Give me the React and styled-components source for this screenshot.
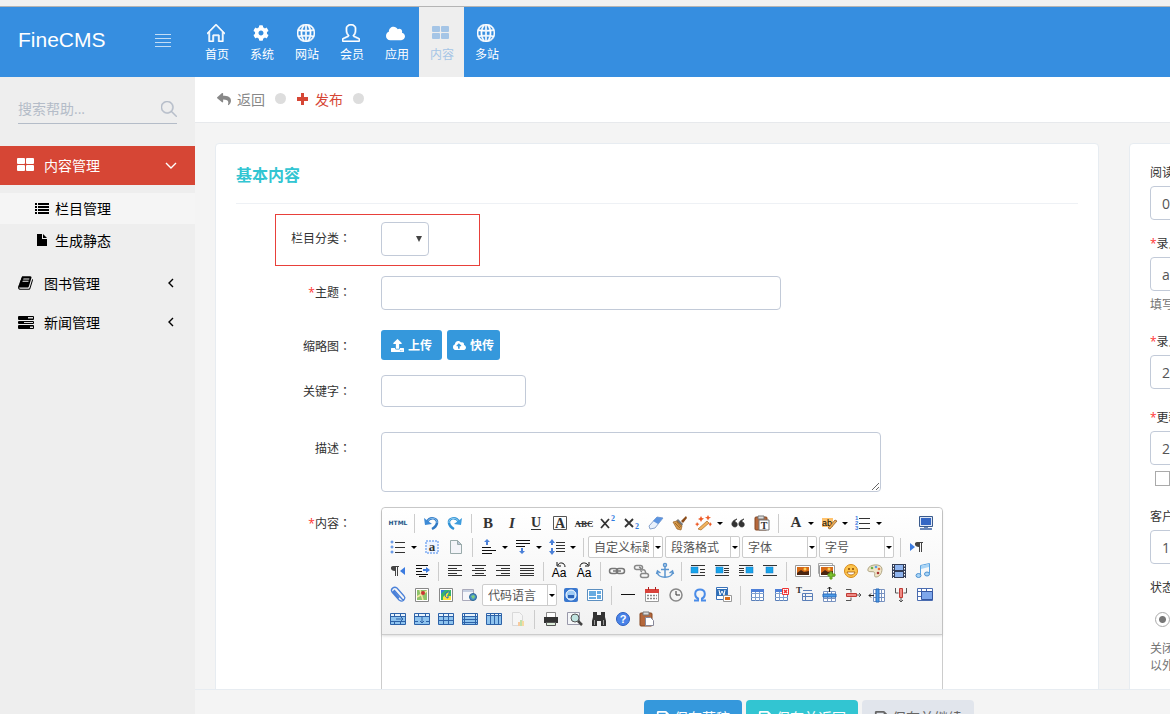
import styled, { createGlobalStyle } from "styled-components";
import {
  FaCloud,
  FaCloudUploadAlt,
  FaCog,
  FaReply,
  FaSave,
  FaUpload,
} from "react-icons/fa";
import { SlGlobe, SlHome, SlMagnifier, SlUser } from "react-icons/sl";

const GlobalStyle = createGlobalStyle`
  * {
    box-sizing: border-box;
  }
  body {
    margin: 0;
    background: #f4f4f4;
    color: #333;
    font-family: "Open Sans", "Noto Sans CJK SC", sans-serif;
    font-size: 12px;
  }
  button, input, select, textarea {
    font-family: inherit;
  }
  a {
    color: inherit;
    text-decoration: none;
  }
`;

const Shell = styled.div`
  height: 100vh;
  overflow: auto;
  scrollbar-width: none;
`;
const Page = styled.div`
  display: flex;
  flex-direction: column;
  min-width: 1423px;
  min-height: 100%;
`;
const TopStrip = styled.div`
  height: 7px;
  background: #f1f1f1;
  border-bottom: 1px solid #b4b4b4;
`;

/* header */
const Header = styled.header`
  display: flex;
  height: 70px;
  background: #368ee0;
  color: #fff;
`;
const Brand = styled.div`
  display: flex;
  align-items: center;
  justify-content: space-between;
  width: 194px;
  padding: 0 23px 4px 18px;
`;
const Logo = styled.a`
  font-family: "Liberation Sans", sans-serif;
  font-size: 21px;
  line-height: 24px;
`;
const MenuToggle = styled.button`
  display: flex;
  flex-direction: column;
  gap: 3px;
  width: 16px;
  padding: 0;
  border: 0;
  background: none;
`;
const MenuLine = styled.span`
  height: 1px;
  background: #c3ddf6;
`;
const Nav = styled.nav`
  display: flex;
`;
const NavItem = styled.a`
  display: flex;
  flex-direction: column;
  align-items: center;
  gap: 3px;
  width: 45px;
  padding: 16px 0 0 1px;
  font-size: 12px;
  line-height: 18px;
  background: ${(props) => (props.$active ? "#eee" : "transparent")};
  color: ${(props) => (props.$active ? "#a5c5e6" : "#fff")};
`;
const NavIcon = styled.span`
  display: flex;
  align-items: center;
  height: 20px;
  margin-right: 3px;
  font-size: ${(props) => props.$size || 18}px;
  stroke-width: 36px;
  svg {
    stroke-width: ${(props) => (props.$size ? 0 : 36)}px;
    stroke: ${(props) => (props.$size ? "none" : "currentColor")};
  }
`;

/* sidebar */
const Columns = styled.div`
  display: flex;
  flex: 1;
`;
const Sidebar = styled.aside`
  width: 195px;
  flex: none;
  background: #eee;
`;
const Search = styled.label`
  display: flex;
  align-items: center;
  height: 30px;
  margin: 17px 18px 22px;
  border-bottom: 1px solid #b4bcc8;
  color: #b4bcc8;
  font-size: 16px;
  svg {
    stroke: currentColor;
    stroke-width: 36px;
  }
`;
const SearchInput = styled.input`
  flex: 1;
  min-width: 0;
  padding: 0;
  border: 0;
  outline: 0;
  background: none;
  font-size: 14px;
  &::placeholder {
    color: #b4bcc8;
  }
`;
const MenuItem = styled.a`
  display: flex;
  align-items: center;
  height: 39px;
  padding: 0 18px 2px 17px;
  font-size: 14px;
  background: ${(props) => (props.$active ? "#d64635" : "transparent")};
  color: ${(props) => (props.$active ? "#fff" : "#000")};
`;
const MenuIcon = styled.span`
  display: flex;
  width: 27px;
`;
const MenuText = styled.span`
  flex: 1;
`;
const SubMenu = styled.div`
  display: grid;
  gap: 1px;
  padding: 8px 0;
`;
const SubItem = styled.a`
  display: flex;
  align-items: center;
  height: 31px;
  padding: 0 0 2px 35px;
  font-size: 14px;
  color: #000;
  background: ${(props) => (props.$active ? "#f5f5f5" : "transparent")};
`;
const SubIcon = styled.span`
  display: flex;
  width: 20px;
`;

/* content */
const Content = styled.main`
  flex: 1;
  min-width: 0;
`;
const Crumbs = styled.div`
  display: flex;
  align-items: center;
  gap: 10px;
  height: 46px;
  padding: 0 22px 2px;
  background: #fff;
  border-bottom: 1px solid #e7e9ec;
  font-size: 14px;
`;
const Crumb = styled.a`
  display: flex;
  align-items: center;
  gap: 6px;
  color: ${(props) => (props.$red ? "#d64635" : "#888")};
`;
const Dot = styled.span`
  width: 11px;
  height: 11px;
  border-radius: 50%;
  background: #ddd;
`;
const Panels = styled.form`
  display: flex;
  gap: 30px;
  padding: 20px;
`;
const Panel = styled.section`
  flex: 1;
  min-width: 0;
  padding: 20px;
  border: 1px solid #e7ecf1;
  border-radius: 4px;
  background: #fff;
`;
const SidePanel = styled(Panel)`
  flex: none;
  width: 274px;
  padding-top: 19px;
`;
const PanelTitle = styled.h2`
  margin: 0 0 18px;
  padding-bottom: 17px;
  border-bottom: 1px solid #eef1f5;
  font-size: 16px;
  line-height: 22px;
  font-weight: 700;
  color: #32c5d2;
`;
const FormRow = styled.div`
  position: relative;
  display: grid;
  grid-template-columns: 115px minmax(0, 1fr);
  column-gap: 30px;
  align-items: start;
  margin-bottom: ${(props) => props.$gap || 20}px;
`;
const Highlight = styled.span`
  position: absolute;
  top: -8px;
  left: 39px;
  width: 205px;
  height: 52px;
  border: 1px solid #e8403a;
  pointer-events: none;
`;
const Label = styled.label`
  padding-top: 7px;
  line-height: 20px;
  text-align: right;
`;
const Colon = styled.span`
  font-family: "Noto Sans CJK TC", sans-serif;
  line-height: 1;
`;
const Star = styled.span`
  color: #f33;
`;
const TextInput = styled.input`
  width: 100%;
  max-width: ${(props) => props.$width || 400}px;
  height: ${(props) => props.$height || 34}px;
  padding: 6px 11px;
  border: 1px solid #c2cad8;
  border-radius: 4px;
  background: #fff;
  color: #555;
  font-size: 14px;
`;
const TextArea = styled.textarea`
  display: block;
  width: 500px;
  height: 60px;
  border: 1px solid #c2cad8;
  border-radius: 4px;
`;
const SelectBox = styled.span`
  position: relative;
  width: 48px;
  height: 34px;
  &::after {
    content: "";
    position: absolute;
    top: 14px;
    right: 7px;
    border: 3px solid transparent;
    border-top: 6px solid #444;
    border-bottom: 0;
    pointer-events: none;
  }
`;
const Select = styled.select`
  width: 100%;
  height: 100%;
  appearance: none;
  border: 1px solid #c2cad8;
  border-radius: 4px;
  background: #fff;
`;
const Buttons = styled.div`
  display: flex;
  gap: 5px;
`;
const UploadButton = styled.button`
  display: flex;
  align-items: center;
  gap: 4px;
  height: 30px;
  padding: 0 ${(props) => props.$pad}px;
  border: 0;
  border-radius: 3px;
  background: #3598dc;
  color: #fff;
  font-size: 12px;
  font-weight: 600;
`;

/* rich text editor */
const Editor = styled.div`
  width: 562px;
  border: 1px solid #ccc;
  border-radius: 4px;
`;
const Toolbar = styled.div`
  padding: 3px 4px;
  border-bottom: 1px solid #ccc;
  border-radius: 4px 4px 0 0;
  background: linear-gradient(#fff, #f1f1f1);
  box-shadow: 0 1px 3px rgba(0, 0, 0, 0.15);
`;
const ToolRow = styled.div`
  display: flex;
  align-items: center;
  height: 24px;
`;
const Tool = styled.button`
  display: flex;
  align-items: center;
  flex: none;
  width: ${(props) => (props.$arrow ? 34 : 24)}px;
  height: 24px;
  padding: 0 0 0 2px;
  border: 0;
  background: none;
`;
const Spacer = styled.span`
  flex: 1;
`;
const Separator = styled.span`
  width: 1px;
  height: 19px;
  margin: 0 4px;
  background: #ccc;
`;
const Caret = styled.span`
  margin-left: 3px;
  border: 3px solid transparent;
  border-top-color: #000;
  border-bottom: 0;
`;
const Combo = styled.span`
  display: flex;
  flex: none;
  width: 75px;
  height: 22px;
  margin-right: 2px;
  border: 1px solid #ccc;
  border-radius: 2px;
  background: #fff;
`;
const ComboSelect = styled.select`
  flex: 1;
  min-width: 0;
  padding: 0 4px 0 5px;
  border: 0;
  appearance: none;
  background: none;
  color: #555;
  font-size: 12px;
`;
const ComboArrow = styled.span`
  display: flex;
  align-items: center;
  flex: none;
  width: 9px;
  border-left: 1px solid #ccc;
  ${Caret} {
    margin-left: 1px;
  }
`;
const EditorBody = styled.textarea`
  display: block;
  width: 100%;
  height: 300px;
  border: 0;
  resize: none;
  background: none;
`;

/* side panel */
const SideField = styled.div`
  display: grid;
  gap: ${(props) => props.$inner || 3}px;
  margin-bottom: ${(props) => props.$gap || 14}px;
`;
const SideLabel = styled.label`
  line-height: 20px;
`;
const Help = styled.p`
  margin: 0;
  padding: 2px 0 1px;
  line-height: 17px;
  color: #737373;
`;
const Choice = styled.label`
  display: flex;
  align-items: center;
  gap: 6px;
  height: 21px;
  padding-left: 5px;
`;
const Tick = styled.input`
  appearance: none;
  width: 15px;
  height: 15px;
  margin: 0;
  border: 1px solid #aaa;
  &[type="radio"] {
    border-radius: 50%;
    background: radial-gradient(#777 0 3px, #fff 4px);
  }
`;

/* bottom bar */
const ActionBar = styled.footer`
  position: fixed;
  left: 195px;
  right: 0;
  bottom: -30px;
  display: flex;
  justify-content: center;
  gap: 4px;
  min-width: 1228px;
  height: 55px;
  padding-top: 10px;
  border-top: 1px solid #e7ecf1;
  background: #f4f4f4;
`;
const tones = {
  blue: ["#3598dc", "#fff"],
  teal: ["#32c5d2", "#fff"],
  grey: ["#e1e5ec", "#666"],
};
const ActionButton = styled.button`
  display: flex;
  align-items: center;
  gap: 4px;
  height: 34px;
  padding: 0 12px;
  border: 0;
  border-radius: 4px;
  background: ${(props) => tones[props.$tone][0]};
  color: ${(props) => tones[props.$tone][1]};
  font-size: 14px;
`;

const GridIcon = () => (
  <svg width="18" height="18" viewBox="0 0 18 18" fill="currentColor" style={{ stroke: "none" }}>
    <rect x="0" y="2" width="8" height="6" rx="1" />
    <rect x="9" y="2" width="8" height="6" rx="1" />
    <rect x="0" y="9" width="8" height="6" rx="1" />
    <rect x="9" y="9" width="8" height="6" rx="1" />
  </svg>
);
const BookIcon = () => (
  <svg width="17" height="16" viewBox="0 0 1792 1792" fill="currentColor">
    <path d="M1703 478q40 57 18 129l-275 906q-19 64-76.5 107.5T1247 1664H324q-77 0-148.5-53.5T76 1479q-24-67-2-127 0-4 3-27t4-37q1-8-3-21.5t-3-19.5q2-11 8-21t16.5-23.5T116 1179q23-38 45-91.5t30-91.5q3-10 .5-30t-.5-28q3-11 17-28t17-23q21-36 42-92t25-90q1-9-2.5-32t.5-28q4-13 22-30.5t22-22.5q19-26 42.5-84.5T404 411q1-8-3-25.5t-2-26.5q2-8 9-18t18-23 17-21q8-12 16.5-30.5t15-35 16-36 19.5-32T536.5 140t36-11.5T620 134l-1 3q38-9 51-9h761q74 0 114 56t18 130l-274 906q-36 119-71.5 153.5T1089 1408H220q-27 0-38 15-11 16-1 43 24 70 144 70h923q29 0 56-15.5t35-41.5l300-987q7-22 5-57 38 15 59 43zm-1064 2q-4 13 2 22.5t20 9.5h608q13 0 25.5-9.5T1311 480l21-64q4-13-2-22.5t-20-9.5H702q-13 0-25.5 9.5T660 416zm-83 256q-4 13 2 22.5t20 9.5h608q13 0 25.5-9.5T1228 736l21-64q4-13-2-22.5t-20-9.5H619q-13 0-25.5 9.5T577 672z" />
  </svg>
);
const TasksIcon = () => (
  <svg width="18" height="14" viewBox="0 0 18 14" fill="#000">
    <rect x="1" y="1" width="16" height="4" rx="1" />
    <rect x="1" y="6" width="16" height="3" rx="1" />
    <rect x="1" y="10" width="16" height="4" rx="1" />
    <path d="M11 2h5v1.500h-5zM7 7h9v1H7zM13 11.500h3V13h-3z" fill="#ddd" />
  </svg>
);
const ListIcon = () => (
  <svg width="14" height="14" viewBox="0 0 14 14">
    <path d="M0 2h2v2H0zM0 5h2v2H0zM0 8h2v2H0zM0 11h2v2H0zM3 2h11v2H3zM3 5h11v2H3zM3 8h11v2H3zM3 11h11v2H3z" />
  </svg>
);
const FileIcon = () => (
  <svg width="14" height="14" viewBox="0 0 14 14">
    <path d="M2 1h5v5h5v7H2zM8 1l4 4H8z" fill="#000" />
  </svg>
);
const PlusIcon = () => (
  <svg width="13" height="14" viewBox="0 0 13 14">
    <path d="M5 1h3v4h4v4H8v4H5V9H1V5h4z" fill="currentColor" />
  </svg>
);
const Angle = ({ d }) => (
  <svg width="12" height="12" viewBox="0 0 12 12" fill="none" stroke="currentColor" strokeWidth="1.400">
    <path d={d} />
  </svg>
);

const Lines = ({ d, color = "#333" }) => <path d={d} stroke={color} fill="none" />;
const Glyph = ({ x = 10, y = 15, size = 15, color = "#333", ...rest }) => (
  <text x={x} y={y} fontSize={size} fill={color} textAnchor="middle" fontFamily="Liberation Serif, serif" {...rest} />
);
const Grid = () => (
  <>
    <path d="M4.500 4.500h12v11h-12z" fill="#fff" stroke="#5a7fb8" />
    <Lines d="M8.500 4v12M12.500 4v12M4 8.500h13M4 12.500h13" color="#7fa0cf" />
  </>
);
const BlueGrid = ({ d }) => (
  <>
    <path d="M2.500 4.500h15v11h-15z" fill="#8ec3ee" stroke="#2d62a8" />
    <path d="M3 5h14v2H3z" fill="#e8f3fc" />
    <Lines d={d} color="#2d62a8" />
  </>
);
const Pilcrow = ({ x }) => (
  <path d={`M${x + 4} 5h6v1h-1v9h-1V6h-1v9h-1v-5c-5 0-5-5-2-5z`} fill="#444" />
);
const Wrap = ({ x, d }) => (
  <>
    <Lines d={`M3 4.500h14M3 14.500h14${d}`} />
    <rect x={x} y="6" width="7" height="6" fill="#18a4ea" stroke="#1479c4" strokeWidth=".5" />
  </>
);
const Photo = () => (
  <>
    <path d="M2.500 4.500h15v11h-15z" fill="#fff" stroke="#999" />
    <path d="M4 6h12v8H4z" fill="#d66a16" />
    <path d="M4 12l4-3 3 2 5-1v4H4z" fill="#4a2410" />
    <circle cx="12" cy="8" r="1.500" fill="#ffd257" />
  </>
);
const Clipboard = ({ children }) => (
  <>
    <rect x="3" y="4" width="12" height="13" rx="1" fill="#b5683c" stroke="#854720" />
    <path d="M6 3h6v3H6z" fill="#ddd" stroke="#777" />
    {children}
  </>
);

// toolbar drawings, all on a 20x20 board
const art = {
  html: (
    <text x="10" y="12" fontSize="6" fontWeight="700" fill="#1f5687" textAnchor="middle" fontFamily="DejaVu Sans, sans-serif">
      HTML
    </text>
  ),
  undo: (
    <>
      <path d="M6 9c3-6 11-4 10 1-.500 3-3 5-5 6" fill="none" stroke="#2f78c4" strokeWidth="2.500" />
      <path d="M6 9c3-6 11-4 10 1" fill="none" stroke="#8cc4f2" />
      <path d="M3 5l1 7 7-1z" fill="#3d8ad6" />
    </>
  ),
  redo: (
    <>
      <path d="M14 9C11 3 3 5 4 10c.500 3 3 5 5 6" fill="none" stroke="#2f90d4" strokeWidth="2.500" />
      <path d="M14 9C11 3 3 5 4 10" fill="none" stroke="#9ad6f5" />
      <path d="M17 5l-1 7-7-1z" fill="#3d9cde" />
    </>
  ),
  bold: <Glyph fontWeight="700">B</Glyph>,
  italic: <Glyph fontStyle="italic" fontWeight="700">I</Glyph>,
  underline: (
    <>
      <Glyph y={14} size={14} fontWeight="700">U</Glyph>
      <Lines d="M5 16.500h10" />
    </>
  ),
  border: (
    <>
      <path d="M3.500 3.500h13v13h-13z" fill="none" stroke="#555" />
      <Glyph fontWeight="700" size={14}>A</Glyph>
    </>
  ),
  strike: (
    <>
      <Glyph y={14} size={9} fontWeight="700">ABC</Glyph>
      <Lines d="M2 10.500h16" />
    </>
  ),
  sup: (
    <>
      <path d="M3 6l8 9M11 6l-8 9" stroke="#333" strokeWidth="1.800" />
      <Glyph x={15} y={8} size={8} color="#2f7be0" fontWeight="700">2</Glyph>
    </>
  ),
  sub: (
    <>
      <path d="M3 6l8 8M11 6l-8 8" stroke="#333" strokeWidth="1.800" />
      <Glyph x={15} y={16} size={8} color="#2f7be0" fontWeight="700">2</Glyph>
    </>
  ),
  eraser: (
    <>
      <path d="M3 13l8-9 6 1-8 10-5 1z" fill="#e9f1fc" stroke="#8aa4cc" />
      <path d="M11 4l6 1-5 6-5-3z" fill="#5c94e0" />
    </>
  ),
  brush: (
    <>
      <path d="M16 3l1 2-4 5-2-2z" fill="#8a4b18" />
      <path d="M8 6l5 5-1 2-6-5z" fill="#777" />
      <path d="M3 9l4-1 5 5-1 4-4-1z" fill="#d69a4c" stroke="#9a6020" strokeWidth=".7" />
      <path d="M5 10l5 5M7 9l4 5" stroke="#8a5518" strokeWidth=".7" />
    </>
  ),
  wand: (
    <>
      <path d="M4 16l9-8 2 2-8 7z" fill="#f2b25c" stroke="#a96a26" strokeWidth=".7" />
      <path d="M7 3l1 2 2 .5L8 7 7 9 6 7 4 6l2-1zM14 2l1 2 2 .5-2 1-1 2-1-2-2-1 2-.5zM3 9l1 1.500 1.500.5L4 12l-1 1.500L2.500 12 1 11l1.500-.5zM16 9l1 1.500 1 .5-1 1-1 1.500-.5-1.500-1-1 1-.5z" fill="#ee5a26" />
    </>
  ),
  quote: (
    <path
      d="M9 6c-2 1-2 2-2 3 3 0 3 5 0 5-4 0-5-6 2-8zM16 6c-2 1-2 2-2 3 3 0 3 5 0 5-4 0-5-6 2-8z"
      fill="#333"
      stroke="#333"
      strokeWidth=".7"
    />
  ),
  pastetext: (
    <Clipboard>
      <path d="M7 7h10v10H7z" fill="#fff" stroke="#777" />
      <Glyph x={12} y={16} size={10} fontWeight="700">T</Glyph>
    </Clipboard>
  ),
  color: <Glyph x={11} y={14} size={15} fontWeight="700">A</Glyph>,
  back: (
    <>
      <path d="M3 5h11v9H3z" fill="#ffc36e" />
      <text x="8" y="13" fontSize="9" textAnchor="middle" fontFamily="Liberation Sans, sans-serif">ab</text>
      <path d="M9 15l7-8 2 1-7 8z" fill="#e8b057" stroke="#8a4b18" strokeWidth=".7" />
    </>
  ),
  ol: (
    <>
      <text fontSize="6" fontWeight="700" fill="#3b7be0" fontFamily="Liberation Sans, sans-serif">
        <tspan x="2" y="7">1</tspan>
        <tspan x="2" y="12">2</tspan>
        <tspan x="2" y="17">3</tspan>
      </text>
      <Lines d="M6 5.500h11M6 10.500h11M6 15.500h11" />
    </>
  ),
  screen: (
    <>
      <path d="M3.500 3.500h13v10h-13z" fill="#dfe8f6" stroke="#3b5b8d" />
      <path d="M5 5h10v7H5z" fill="#3567c4" />
      <path d="M8 14h4v1h4v2H4v-2h4z" fill="#6a87b8" />
    </>
  ),
  ul: (
    <>
      <g fill="#fff" stroke="#3b7be0">
        <circle cx="4" cy="5" r="1" />
        <circle cx="4" cy="10" r="1" />
        <circle cx="4" cy="15" r="1" />
      </g>
      <Lines d="M7 5.500h10M7 10.500h10M7 15.500h10" />
    </>
  ),
  selectall: (
    <>
      <path d="M4 4h12v12H4z" fill="#eef4ff" stroke="#9dc0f5" strokeWidth="2" strokeDasharray="2 1" />
      <Glyph y={14} size={13} fontWeight="700">a</Glyph>
    </>
  ),
  page: (
    <>
      <path d="M4.500 3.500h7l4 4v9h-11z" fill="#f3f4f8" stroke="#9aa" />
      <path d="M11.500 3.500v4h4z" fill="#bcc6d8" stroke="#9aa" />
    </>
  ),
  rowtop: (
    <>
      <Lines d="M3 10.500h9M3 13.500h14M3 16.500h10" color="#111" />
      <path d="M8 2l3 3H9v3H7V5H5z" fill="#4a80d8" />
    </>
  ),
  rowbottom: (
    <>
      <Lines d="M3 3.500h14M3 6.500h14M3 9.500h9" color="#111" />
      <path d="M9 17l3-3h-2v-3H8v3H6z" fill="#4a80d8" />
    </>
  ),
  lineheight: (
    <>
      <Lines d="M9 5.500h9M9 8.500h9M9 11.500h9M9 14.500h9" color="#333" />
      <path d="M5 2l3 4H6v2H4V6H2zM5 18l3-4H6v-3H4v3H2z" fill="#4a80d8" />
    </>
  ),
  ltr: (
    <>
      <path d="M3 6l5 4-5 4z" fill="#3b7be0" />
      <Pilcrow x={6} />
    </>
  ),
  rtl: (
    <>
      <path d="M17 6l-5 4 5 4z" fill="#3b7be0" />
      <Pilcrow x={1} />
    </>
  ),
  indent: (
    <>
      <Lines d="M4 4.500h12M4 7.500h6M4 10.500h6M4 13.500h12M7 15.500h7" color="#111" />
      <path d="M11 8h3V6l4 3-4 3v-2h-3z" fill="#3b7be0" />
    </>
  ),
  left: <Lines d="M3 4.500h14M3 7.500h9M3 9.500h14M3 12.500h9M3 14.500h14" />,
  center: <Lines d="M3 4.500h14M6 7.500h9M3 9.500h14M6 12.500h9M3 14.500h14" />,
  right: <Lines d="M3 4.500h14M8 7.500h9M3 9.500h14M8 12.500h9M3 14.500h14" />,
  justify: <Lines d="M3 4.500h14M3 7.500h14M3 9.500h14M3 12.500h14M3 14.500h14" />,
  upper: (
    <>
      <text x="9" y="16" fontSize="12" textAnchor="middle" fontFamily="Liberation Sans, sans-serif">Aa</text>
      <path d="M15 6c0-5-6-5-7-2M7 1v4h4" fill="none" stroke="#111" />
    </>
  ),
  lower: (
    <>
      <text x="10" y="16" fontSize="12" textAnchor="middle" fontFamily="Liberation Sans, sans-serif">Aa</text>
      <path d="M6 6c0-5 6-5 8-2M15 1v4h-4" fill="none" stroke="#111" />
    </>
  ),
  link: (
    <g fill="none" stroke="#777" strokeWidth="1.500">
      <rect x="2.500" y="7.500" width="8" height="5" rx="2.500" />
      <rect x="9.500" y="7.500" width="8" height="5" rx="2.500" />
      <path d="M6 10h8" />
    </g>
  ),
  unlink: (
    <g fill="none" stroke="#888" strokeWidth="1.500">
      <rect x="3.500" y="4.500" width="8" height="4" rx="2" />
      <rect x="9.500" y="12.500" width="8" height="4" rx="2" />
      <path d="M8 6c4 1 0 4 3 5M11 9c4-1 3 2 4 4" />
    </g>
  ),
  anchor: (
    <g fill="none" stroke="#5b95cf" strokeWidth="1.500">
      <circle cx="10" cy="4" r="1.500" />
      <path d="M10 6v11M6 8.500h8M2.500 11c0 7 15 7 15 0M1.500 13l1-3 3 2M18.500 13l-1-3-3 2" />
    </g>
  ),
  imgleft: <Wrap x={3} d="M12 8.500h5M12 11.500h5" />,
  imgright: <Wrap x={10} d="M3 7.500h5M3 9.500h5M3 11.500h5" />,
  imginline: <Wrap x={4} d="M12 7.500h5M12 9.500h5M12 11.500h5" />,
  imgcenter: <Wrap x={6} d="" />,
  image: <Photo />,
  images: (
    <>
      <path d="M1.500 2.500h14v10h-14z" fill="#fff" stroke="#aaa" />
      <Photo />
      <path d="M13 11h2v2h3v2h-3v3h-2v-3h-2v-2h2z" fill="#7cc22e" stroke="#62a020" />
    </>
  ),
  smile: (
    <>
      <circle cx="10" cy="10" r="6.500" fill="#fcc44c" stroke="#d88918" />
      <path d="M6 11h8c-1 4-7 4-8 0z" fill="#fff" stroke="#a85c08" strokeWidth=".8" />
      <circle cx="8" cy="8" r="1" fill="#8a4700" />
      <circle cx="12" cy="8" r="1" fill="#8a4700" />
    </>
  ),
  palette: (
    <>
      <path d="M3 8c1-5 14-6 14 0 0 5-3 8-6 8-3 0 0-4-2-5s-7 1-6-3z" fill="#efe5c8" stroke="#b0a684" />
      <circle cx="7" cy="7" r="1.300" fill="#6ab04a" />
      <circle cx="11" cy="6" r="1.300" fill="#5c9de8" />
      <circle cx="14" cy="8" r="1.300" fill="#e8703a" />
      <circle cx="13" cy="12" r="1.300" fill="#a33" />
    </>
  ),
  video: (
    <>
      <path d="M3 3h14v14H3z" fill="#333d57" />
      <path d="M6 4h8v5H6zM6 11h8v5H6z" fill="#8fb4ee" />
      <path d="M4.500 4v13M15.500 4v13" stroke="#fff" strokeDasharray="1.500 1.500" />
    </>
  ),
  music: (
    <>
      <path d="M7.500 14V4.500l9-2V12" fill="none" stroke="#5aa2e0" />
      <path d="M8 5l8-2v3L8 8z" fill="#a8d4f6" />
      <ellipse cx="5.500" cy="14.500" rx="2.500" ry="2" fill="#a8d4f6" stroke="#4f92d0" />
      <ellipse cx="14" cy="13" rx="2.500" ry="2" fill="#a8d4f6" stroke="#4f92d0" />
    </>
  ),
  attach: (
    <path d="M6 5l8 9c2 2 4-1 2-3L9 3C6 1 2 4 4 7l7 8c3 2 5 1 5-1M5 6l6 7" fill="none" stroke="#4a80d8" strokeWidth="1.300" />
  ),
  map: (
    <>
      <path d="M3.500 3.500h13v13h-13z" fill="#fff" stroke="#888" />
      <path d="M5 5h10v10H5z" fill="#8fc46c" />
      <path d="M5 12l10-6M8 5l3 10" stroke="#f4e7a0" strokeWidth="1.500" />
      <circle cx="11" cy="8" r="2" fill="#c33" />
    </>
  ),
  gmap: (
    <>
      <path d="M3.500 3.500h13v13h-13z" fill="#fff" stroke="#888" />
      <path d="M5 5h10v10H5z" fill="#35b26b" />
      <path d="M5 5h4l-4 4z" fill="#2f7be0" />
      <path d="M14 5L7 12v3h8v-4h-4z" fill="#ffe23c" />
      <path d="M14 7c-6-1-6 6-2 6v-2" fill="none" stroke="#1f5fd0" />
    </>
  ),
  frame: (
    <>
      <path d="M2.500 4.500h11v11h-11z" fill="#f6f7fa" stroke="#aab" />
      <path d="M3 5h10v2H3z" fill="#c6d0e2" />
      <circle cx="13" cy="12" r="3.500" fill="#4a92c8" stroke="#2b6594" />
      <path d="M11 11l3-1 1 2-2 2z" fill="#7fd07a" />
    </>
  ),
  snap: (
    <>
      <rect x="3" y="3" width="14" height="14" rx="2" fill="#3a78cf" />
      <circle cx="10" cy="10" r="5" fill="#9fcbf5" stroke="#fff" />
      <path d="M7 10h6v3H7z" fill="#2a62b8" />
    </>
  ),
  template: (
    <>
      <path d="M2.500 4.500h15v11h-15z" fill="#fff" stroke="#5c8fc0" />
      <path d="M4 6h7v5H4zM12 6h4v3h-4zM12 10h4v4h-4zM4 12h7v2H4z" fill="#66abe0" />
    </>
  ),
  hr: <Lines d="M3 9.500h14" color="#111" />,
  date: (
    <>
      <path d="M3.500 4.500h13v12h-13z" fill="#fff" stroke="#999" />
      <path d="M3 4h14v4H3z" fill="#d9433c" />
      <path d="M6.500 2v3M13.500 2v3" stroke="#a22" />
      <path d="M5 10.500h10M5 13.500h10" stroke="#888" strokeWidth="1.500" strokeDasharray="2 1" />
    </>
  ),
  time: (
    <>
      <circle cx="10" cy="10" r="6" fill="#f6f6f6" stroke="#888" strokeWidth="1.500" />
      <path d="M10 6v4h4" fill="none" stroke="#333" />
    </>
  ),
  omega: (
    <path d="M4 15.500h4v-2c-4-2-4-9 2-9s6 7 2 9v2h4" fill="none" stroke="#4a8ce8" strokeWidth="2" />
  ),
  word: (
    <>
      <path d="M2.500 2.500h11v12h-11z" fill="#fff" stroke="#3b72b8" />
      <path d="M3 4h10v7H3z" fill="#2d6fb8" />
      <path d="M5 5l1 5 2-4 2 4 1-5" fill="none" stroke="#fff" />
      <path d="M9.500 10.500h8v6h-8z" fill="#fff" stroke="#999" />
      <path d="M11 12h5v3h-5z" fill="#d66a16" />
    </>
  ),
  table: (
    <>
      <Grid />
      <path d="M4 4h13v3H4z" fill="#4f80d8" />
    </>
  ),
  deltable: (
    <>
      <Grid />
      <path d="M4 4h9v3H4z" fill="#4f80d8" />
      <path d="M11.500 3.500h6v6h-6z" fill="#fff" stroke="#e33" />
      <path d="M13 5l3 3M16 5l-3 3" stroke="#e33" strokeWidth="1.500" />
    </>
  ),
  paratable: (
    <>
      <Glyph x={4} y={8} size={9} fontWeight="700">T</Glyph>
      <path d="M7.500 8.500h10v7h-10zM7 11.500h11M10.500 8v8M8 5.500h9" fill="none" stroke="#5a7fb8" />
    </>
  ),
  insrow: (
    <>
      <path d="M4.500 6.500h12v10h-12zM8.500 6v11M12.500 6v11M4 13.500h13" fill="#fff" stroke="#7892c0" />
      <path d="M4 9h13v3H4z" fill="#4c9be8" stroke="#2869b8" />
      <path d="M10.500 7V2M8.500 4l2-2 2 2" fill="none" stroke="#222" />
    </>
  ),
  delrow: (
    <>
      <path d="M3 4.500h5v3M3 15.500h5v-3M14 10h4M16 8l2 2-2 2" fill="none" stroke="#555" />
      <path d="M3.500 8.500h10v3h-10z" fill="#ee8a84" stroke="#c03a34" />
    </>
  ),
  inscol: (
    <>
      <path d="M6.500 4.500h11v12h-11zM6 8.500h12M6 12.500h12M14.500 4v13" fill="#fff" stroke="#7892c0" />
      <path d="M9 4h3v13H9z" fill="#4c9be8" stroke="#2869b8" />
      <path d="M7 10.500H2M4 8.500l-2 2 2 2" fill="none" stroke="#222" />
    </>
  ),
  delcol: (
    <>
      <path d="M4.500 3v5h3M15.500 3v5h-3M10 13v4M8 15l2 2 2-2" fill="none" stroke="#555" />
      <path d="M8.500 3.500h3v9h-3z" fill="#ee8a84" stroke="#c03a34" />
    </>
  ),
  merge: (
    <>
      <path d="M2.500 3.500h15v12h-15zM6.500 3v4M11.500 3v4M2 6.500h16M2 11.500h4" fill="#fff" stroke="#4a6cb0" />
      <path d="M6.500 6.500h11v8h-11z" fill="#7da6ea" stroke="#3456a0" />
    </>
  ),
  mergeright: <BlueGrid d="M2 7.500h16M2 12.500h16M6.500 4v4M6.500 12v4M12.500 4v4M12.500 12v4M8 10h7M13 8l2 2-2 2" />,
  mergedown: <BlueGrid d="M2 7.500h16M6.500 4v4M13.500 4v4M2 12.500h4M14 12.500h4M10 8v6M8 12l2 2 2-2" />,
  splitcell: <BlueGrid d="M2 7.500h16M2 11.500h16M7.500 4v12M12.500 4v12" />,
  splitrow: <BlueGrid d="M2 7.500h16M2 10.500h16M2 13.500h16M4.500 4v12M15.500 4v12" />,
  splitcol: <BlueGrid d="M2 6.500h16M6.500 4v12M10.500 4v12M14.500 4v12" />,
  charts: (
    <g opacity=".45">
      <path d="M4.500 3.500h7l3 3v10h-10z" fill="#fafafa" stroke="#bbb" />
      <path d="M10 13h2v4h-2z" fill="#ff9b3a" />
      <path d="M12 11h2v6h-2z" fill="#8c5" />
      <path d="M14 12h2v5h-2z" fill="#fb4" />
    </g>
  ),
  print: (
    <>
      <path d="M5.500 3.500h9v5h-9z" fill="#fff" stroke="#888" />
      <path d="M3 8h14v6H3z" fill="#333" />
      <path d="M5.500 13.500h9v3h-9z" fill="#ddeeda" stroke="#555" />
    </>
  ),
  preview: (
    <>
      <path d="M2.500 3.500h12v12h-12z" fill="#f4f6f8" stroke="#99a" />
      <circle cx="10" cy="9" r="4" fill="#bfe3e0" stroke="#555" />
      <path d="M13 12l4 4" stroke="#444" strokeWidth="2.500" />
    </>
  ),
  find: (
    <>
      <path d="M4 3h4v3h4V3h4v5l1 4v5h-5v-5H8v5H3v-5l1-4z" fill="#333" />
      <path d="M5.500 11v5M14.500 11v5" stroke="#999" />
    </>
  ),
  help: (
    <>
      <circle cx="10" cy="10" r="6.500" fill="#4a83e8" stroke="#2b5fc0" />
      <text x="10" y="14" fontSize="11" fontWeight="700" fill="#fff" textAnchor="middle" fontFamily="Liberation Sans, sans-serif">?</text>
    </>
  ),
  paste: (
    <Clipboard>
      <path d="M8.500 8.500h5l3 3v5h-8z" fill="#fff" stroke="#889" />
    </Clipboard>
  ),
};

// "|" separator, "~" spacer, trailing "+" drop-down arrow, ":" combo box
const toolRows = [
  "html | undo redo | bold italic underline border strike sup sub eraser brush wand+ quote pastetext | color+ back+ ol+ ~ screen",
  "ul+ selectall page | rowtop+ rowbottom+ lineheight+ | :自定义标题 :段落格式 :字体 :字号 | ltr",
  "rtl indent | left center right justify | upper lower | link unlink anchor | imgleft imginline imgright imgcenter | image images smile palette video music",
  "attach map gmap frame :代码语言 snap template | hr date time omega word | table deltable paratable insrow delrow inscol delcol merge",
  "mergeright mergedown splitcell splitrow splitcol charts | print preview find help paste",
];

const ToolItem = ({ item }) => {
  if (item === "|") return <Separator />;
  if (item === "~") return <Spacer />;
  if (item[0] === ":") {
    return (
      <Combo>
        <ComboSelect aria-label={item.slice(1)}>
          <option>{item.slice(1)}</option>
        </ComboSelect>
        <ComboArrow>
          <Caret />
        </ComboArrow>
      </Combo>
    );
  }
  const arrow = item.endsWith("+");
  const name = arrow ? item.slice(0, -1) : item;
  return (
    <Tool type="button" aria-label={name} $arrow={arrow}>
      <svg width="20" height="20" viewBox="0 0 20 20">
        {art[name]}
      </svg>
      {arrow && <Caret />}
    </Tool>
  );
};

const navItems = [
  { text: "首页", icon: <SlHome /> },
  { text: "系统", icon: <FaCog />, size: 16 },
  { text: "网站", icon: <SlGlobe /> },
  { text: "会员", icon: <SlUser /> },
  { text: "应用", icon: <FaCloud />, size: 19 },
  { text: "内容", icon: <GridIcon />, size: 18, active: true },
  { text: "多站", icon: <SlGlobe /> },
];

const sideFields = [
  { id: "hits", label: "阅读数", value: "0" },
  { id: "author", label: "录入作者", value: "admin", star: true, help: "填写录入作者的会员名称", gap: 18 },
  { id: "inputtime", label: "录入时间", value: "2016-08-20 10:20:30", star: true, gap: 19 },
  { id: "updatetime", label: "更新时间", value: "2016-08-20 10:20:30", star: true, tick: "不更新", gap: 18 },
  { id: "ip", label: "客户端IP", value: "127.0.0.1" },
];

const App = () => {
  return (
    <Shell>
      <GlobalStyle />
      <Page>
        <TopStrip />
        <Header>
          <Brand>
            <Logo href="#">FineCMS</Logo>
            <MenuToggle type="button" aria-label="菜单">
              <MenuLine />
              <MenuLine />
              <MenuLine />
              <MenuLine />
            </MenuToggle>
          </Brand>
          <Nav>
            {navItems.map((item) => (
              <NavItem href="#" key={item.text} $active={item.active}>
                <NavIcon $size={item.size}>{item.icon}</NavIcon>
                {item.text}
              </NavItem>
            ))}
          </Nav>
        </Header>
        <Columns>
          <Sidebar>
            <Search>
              <SearchInput placeholder="搜索帮助..." aria-label="搜索帮助" />
              <SlMagnifier />
            </Search>
            <MenuItem href="#" $active>
              <MenuIcon>
                <GridIcon />
              </MenuIcon>
              <MenuText>内容管理</MenuText>
              <Angle d="M1 4l5 5 5-5" />
            </MenuItem>
            <SubMenu>
              <SubItem href="#" $active>
                <SubIcon>
                  <ListIcon />
                </SubIcon>
                栏目管理
              </SubItem>
              <SubItem href="#">
                <SubIcon>
                  <FileIcon />
                </SubIcon>
                生成静态
              </SubItem>
            </SubMenu>
            <MenuItem href="#">
              <MenuIcon>
                <BookIcon />
              </MenuIcon>
              <MenuText>图书管理</MenuText>
              <Angle d="M8 2L4 6l4 4" />
            </MenuItem>
            <MenuItem href="#">
              <MenuIcon>
                <TasksIcon />
              </MenuIcon>
              <MenuText>新闻管理</MenuText>
              <Angle d="M8 2L4 6l4 4" />
            </MenuItem>
          </Sidebar>
          <Content>
            <Crumbs>
              <Crumb href="#">
                <FaReply />
                返回
              </Crumb>
              <Dot />
              <Crumb href="#" $red>
                <PlusIcon />
                发布
              </Crumb>
              <Dot />
            </Crumbs>
            <Panels>
              <Panel>
                <PanelTitle>基本内容</PanelTitle>
                <FormRow>
                  <Highlight />
                  <Label htmlFor="catid">
                    栏目分类<Colon>：</Colon>
                  </Label>
                  <SelectBox>
                    <Select id="catid" />
                  </SelectBox>
                </FormRow>
                <FormRow>
                  <Label htmlFor="title">
                    <Star>*</Star>主题<Colon>：</Colon>
                  </Label>
                  <TextInput id="title" />
                </FormRow>
                <FormRow $gap={15}>
                  <Label as="span">
                    缩略图<Colon>：</Colon>
                  </Label>
                  <Buttons>
                    <UploadButton type="button" $pad={10}>
                      <FaUpload size={13} />
                      上传
                    </UploadButton>
                    <UploadButton type="button" $pad={6}>
                      <FaCloudUploadAlt size={13} />
                      快传
                    </UploadButton>
                  </Buttons>
                </FormRow>
                <FormRow $gap={25}>
                  <Label htmlFor="keywords">
                    关键字<Colon>：</Colon>
                  </Label>
                  <TextInput id="keywords" $width={145} $height={32} />
                </FormRow>
                <FormRow $gap={15}>
                  <Label htmlFor="description">
                    描述<Colon>：</Colon>
                  </Label>
                  <TextArea id="description" />
                </FormRow>
                <FormRow>
                  <Label htmlFor="content">
                    <Star>*</Star>内容<Colon>：</Colon>
                  </Label>
                  <Editor>
                    <Toolbar>
                      {toolRows.map((row) => (
                        <ToolRow key={row}>
                          {row.split(" ").map((item, i) => (
                            <ToolItem item={item} key={i} />
                          ))}
                        </ToolRow>
                      ))}
                    </Toolbar>
                    <EditorBody id="content" />
                  </Editor>
                </FormRow>
              </Panel>
              <SidePanel>
                {sideFields.map((field) => (
                  <SideField key={field.id} $gap={field.gap}>
                    <SideLabel htmlFor={field.id}>
                      {field.star && <Star>*</Star>}
                      {field.label}
                      <Colon>：</Colon>
                    </SideLabel>
                    <TextInput id={field.id} defaultValue={field.value} />
                    {field.help && <Help>{field.help}</Help>}
                    {field.tick && (
                      <Choice>
                        <Tick type="checkbox" />
                        {field.tick}
                      </Choice>
                    )}
                  </SideField>
                ))}
                <SideField $inner={11} $gap={8}>
                  <SideLabel as="span">
                    状态<Colon>：</Colon>
                  </SideLabel>
                  <Choice>
                    <Tick type="radio" name="status" defaultChecked />
                    正常
                  </Choice>
                </SideField>
                <Help>
                  关闭状态下内容除管理员
                  <br />
                  以外的会员均无法访问
                </Help>
              </SidePanel>
            </Panels>
          </Content>
        </Columns>
      </Page>
      <ActionBar>
        <ActionButton type="button" $tone="blue">
          <FaSave />
          保存草稿
        </ActionButton>
        <ActionButton type="button" $tone="teal">
          <FaSave />
          保存并返回
        </ActionButton>
        <ActionButton type="button" $tone="grey">
          <FaSave />
          保存并继续
        </ActionButton>
      </ActionBar>
    </Shell>
  );
};

export default App;
